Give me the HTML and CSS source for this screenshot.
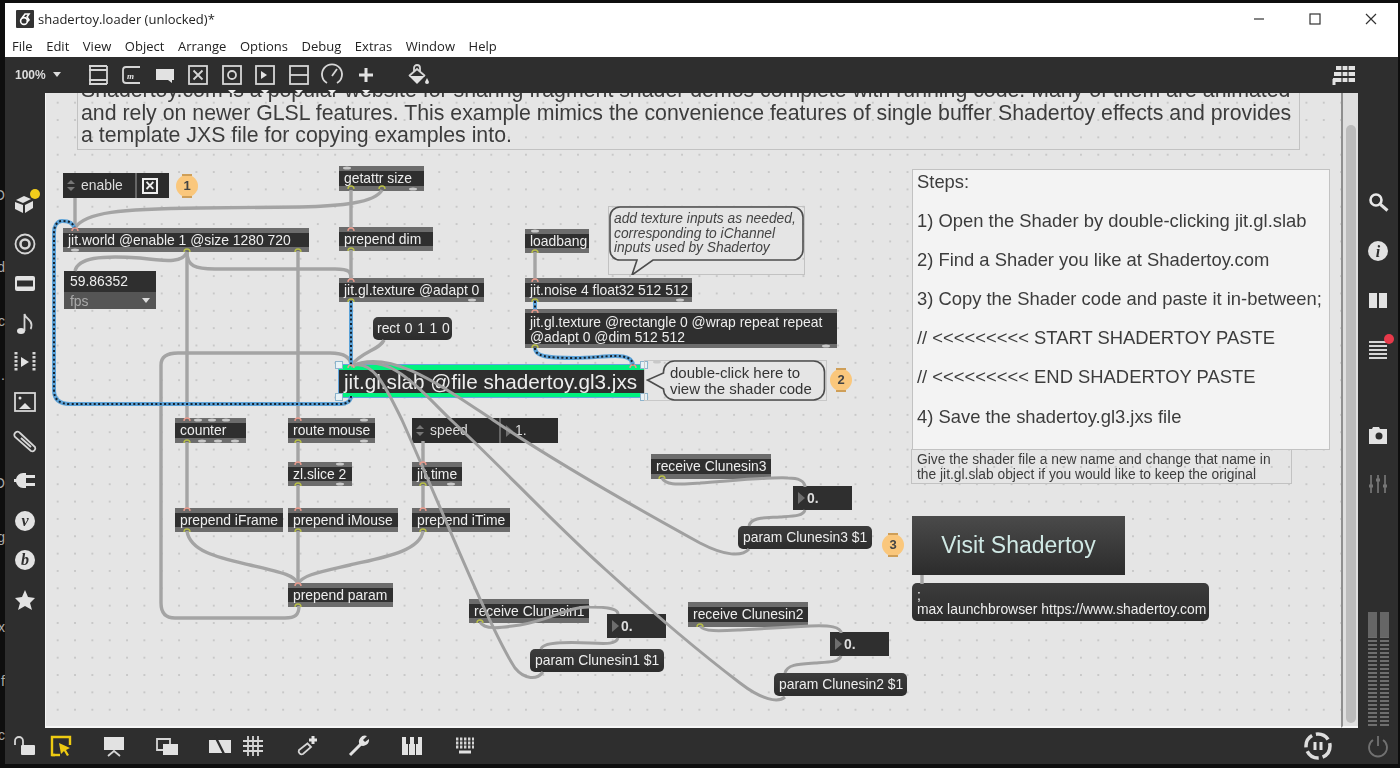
FILE: index.html
```html
<!DOCTYPE html>
<html lang="en">
<head>
    <meta charset="UTF-8">
    <meta name="viewport" content="width=device-width, initial-scale=1.0">
    <title>shadertoy.loader</title>
    <link rel="stylesheet" href="styles.css">
</head>
<body>
    <pre class="edge">










O



d


c


.





O


g




x


f


c</pre>

    <div class="window">
        <div class="titlebar">
            <svg class="app-icon" viewBox="0 0 18 18"><rect width="18" height="18" rx="1" fill="#333"/><circle cx="8" cy="11" r="3.4" fill="none" stroke="#fff" stroke-width="1.6"/><path d="M6 8 9 4h4l-2 3 2 3-2 2" fill="none" stroke="#fff" stroke-width="1.6"/></svg>
            <span class="title">shadertoy.loader (unlocked)*</span>
            <div class="win-btns">
                <svg class="win-btn" viewBox="0 0 12 12"><path d="M1 6h10"/></svg>
                <svg class="win-btn" viewBox="0 0 12 12"><rect x="1" y="1" width="10" height="10"/></svg>
                <svg class="win-btn" viewBox="0 0 12 12"><path d="M1 1l10 10M11 1 1 11"/></svg>
            </div>
        </div>

        <div class="menubar">
            <span>File</span><span>Edit</span><span>View</span><span>Object</span><span>Arrange</span><span>Options</span><span>Debug</span><span>Extras</span><span>Window</span><span>Help</span>
        </div>

        <div class="toolbar">
            <span class="zoom-label">100% <i class="caret"></i></span>
            <svg class="ico" viewBox="0 0 24 24"><path d="M3 3h18M3 7h18M3 17h18M3 21h18M4 3v18M21 3v18"/></svg>
            <svg class="ico" viewBox="0 0 24 24"><path d="M21 4H7a3 3 0 0 0-3 3v10a3 3 0 0 0 3 3h14"/><text x="8" y="16" class="ico-text">m</text></svg>
            <svg class="ico" viewBox="0 0 24 24"><path class="solid" d="M3 6h18v11h-2v3l-4-3H3z"/></svg>
            <svg class="ico" viewBox="0 0 24 24"><rect x="3" y="3" width="18" height="18"/><path d="M7.5 7.5l9 9M16.5 7.5l-9 9"/></svg>
            <div class="drop"><svg class="ico" viewBox="0 0 24 24"><rect x="3" y="3" width="18" height="18"/><circle cx="12" cy="12" r="4"/></svg></div>
            <div class="drop"><svg class="ico" viewBox="0 0 24 24"><rect x="3" y="3" width="18" height="18"/><path class="solid" d="M8 8l6 4-6 4z"/></svg></div>
            <div class="drop"><svg class="ico" viewBox="0 0 24 24"><rect x="3" y="3" width="18" height="18"/><path d="M3 12h18"/></svg></div>
            <div class="drop"><svg class="ico" viewBox="0 0 24 24"><path d="M7 20a10 10 0 1 1 10 0"/><path d="M12 13l5-7"/></svg></div>
            <div class="drop"><svg class="ico" viewBox="0 0 24 24"><path class="thick" d="M12 5v14M5 12h14"/></svg></div>
            <svg class="ico push" viewBox="0 0 24 24"><path class="solid" d="M3 13l8 8 8-8H3z"/><path d="M3 13l8-7 8 7"/><path d="M8 9V5a3 3 0 0 1 6 0v3"/><path class="solid" d="M21 15l2 4a2 2 0 0 1-4 0z"/></svg>
            <svg class="ico ico-table" viewBox="0 0 24 24"><path class="solid" d="M4 3h19v4H4zM2 9h21v4H2zM1 15h22v4H1z"/><path class="slit" d="M10 3v16M16 3v16"/><path class="thick" d="M2 16v6"/></svg>
        </div>

        <div class="main">
            <div class="side side-left">
                <div class="with-dot">
                    <svg class="ico" viewBox="0 0 24 24"><path class="solid" d="M3 8l8-4 7 3-8 4zM2 10l8 3v8l-8-4zM12 13l8-4v7l-8 5z"/></svg>
                    <i class="dot dot-yellow"></i>
                </div>
                <svg class="ico" viewBox="0 0 24 24"><circle cx="12" cy="12" r="9.5"/><circle class="solid-ring" cx="12" cy="12" r="4.5"/></svg>
                <svg class="ico" viewBox="0 0 24 24"><rect class="solid" x="2" y="5" width="20" height="15" rx="2"/><rect class="punch" x="4" y="9.5" width="16" height="6"/></svg>
                <svg class="ico" viewBox="0 0 24 24"><ellipse class="solid" cx="8" cy="20" rx="4" ry="3"/><path d="M11.5 20V3c1 5 7 5 7 11 0 1 0 3-1 4"/></svg>
                <svg class="ico" viewBox="0 0 24 24"><path class="dash" d="M3 2v20M21 2v20"/><path class="solid" d="M8 7l8 5-8 5z"/></svg>
                <svg class="ico" viewBox="0 0 24 24"><rect x="2" y="3" width="20" height="18"/><circle class="solid" cx="7" cy="8" r="1.5"/><path class="solid" d="M6 19l6-6 6 6z"/></svg>
                <svg class="ico" viewBox="0 0 24 24"><path d="M7 3l15 14a3 3 0 0 1-4 4L2 7a3 3 0 0 1 5-4z"/><path d="M8 8l10 9"/></svg>
                <svg class="ico" viewBox="0 0 24 24"><path class="solid" d="M13 4h-3a8 8 0 0 0-7 6H1v3h2a8 8 0 0 0 7 6h3zM13 6h9v3h-9zM13 14h9v3h-9z"/></svg>
                <svg class="ico" viewBox="0 0 24 24"><circle class="solid" cx="12" cy="12" r="10"/><text x="12" y="17" class="ico-letter">v</text></svg>
                <svg class="ico" viewBox="0 0 24 24"><circle class="solid" cx="12" cy="12" r="10"/><text x="12" y="17" class="ico-letter">b</text></svg>
                <svg class="ico" viewBox="0 0 24 24"><path class="solid" d="M12 2l3 7 7 1-5 5 2 7-7-4-7 4 2-7-5-5 7-1z"/></svg>
            </div>

            <div class="patcher">
                <div class="node comment intro">Shadertoy.com is a popular website for sharing fragment shader demos complete with running code. Many of them are animated<br>and rely on newer GLSL features. This example mimics the convenience features of single buffer Shadertoy effects and provides<br>a template JXS file for copying examples into.</div>

                <div class="node attrui enable">
                    <span class="updown"></span><span class="attr-name">enable</span>
                    <span class="attr-val"><i class="check"></i></span>
                </div>
                <div class="node badge b1">1</div>

                <div class="node obj getattr">getattr size</div>
                <div class="node obj world">jit.world @enable 1 @size 1280 720</div>
                <div class="node obj pdim">prepend dim</div>
                <div class="node fps"><div class="fps-val">59.86352</div><div class="fps-unit">fps<i class="caret"></i></div></div>
                <div class="node obj gltex">jit.gl.texture @adapt 0</div>
                <div class="node msg rect">rect 0 1 1 0</div>
                <div class="node obj loadbang">loadbang</div>
                <div class="node obj noise">jit.noise 4 float32 512 512</div>
                <div class="node obj texrect">jit.gl.texture @rectangle 0 @wrap repeat repeat<br>@adapt 0 @dim 512 512</div>

                <div class="node balloon note">
                    <svg viewBox="0 0 197 69"><path d="M12 1h173a10 10 0 0 1 10 10v33a10 10 0 0 1-10 10H45L24 69l5-15H12A10 10 0 0 1 2 44V11A10 10 0 0 1 12 1z"/></svg>
                    <p>add texture inputs as needed,<br>corresponding to iChannel<br>inputs used by Shadertoy</p>
                </div>

                <div class="node slab">jit.gl.slab @file shadertoy.gl3.jxs<i class="grip g-tl"></i><i class="grip g-bl"></i><i class="grip g-tr"></i><i class="grip g-br"></i></div>

                <div class="node balloon dbl">
                    <svg viewBox="0 0 182 41"><path d="M30 1h139a11 11 0 0 1 11 11v17a11 11 0 0 1-11 11H30a11 11 0 0 1-11-11l-16-9 16-7v-1A11 11 0 0 1 30 1z"/></svg>
                    <p>double-click here to<br>view the shader code</p>
                </div>
                <div class="node badge b2">2</div>

                <div class="node obj counter">counter</div>
                <div class="node obj route">route mouse</div>
                <div class="node attrui speed">
                    <span class="updown"></span><span class="attr-name">speed</span>
                    <span class="attr-val"><i class="tri"></i>1.</span>
                </div>
                <div class="node obj zl">zl.slice 2</div>
                <div class="node obj jtime">jit.time</div>
                <div class="node obj iframe">prepend iFrame</div>
                <div class="node obj imouse">prepend iMouse</div>
                <div class="node obj itime">prepend iTime</div>
                <div class="node obj pparam">prepend param</div>

                <div class="node obj recv3">receive Clunesin3</div>
                <div class="node num num3"><i class="tri"></i>0.</div>
                <div class="node msg par3">param Clunesin3 $1</div>
                <div class="node badge b3">3</div>

                <div class="node obj recv1">receive Clunesin1</div>
                <div class="node num num1"><i class="tri"></i>0.</div>
                <div class="node msg par1">param Clunesin1 $1</div>

                <div class="node obj recv2">receive Clunesin2</div>
                <div class="node num num2"><i class="tri"></i>0.</div>
                <div class="node msg par2">param Clunesin2 $1</div>

                <div class="node comment steps">
                    <p>Steps:</p>
                    <p>1) Open the Shader by double-clicking jit.gl.slab</p>
                    <p>2) Find a Shader you like at Shadertoy.com</p>
                    <p>3) Copy the Shader code and paste it in-between;</p>
                    <p>// &lt;&lt;&lt;&lt;&lt;&lt;&lt;&lt;&lt; START SHADERTOY PASTE</p>
                    <p>// &lt;&lt;&lt;&lt;&lt;&lt;&lt;&lt;&lt; END SHADERTOY PASTE</p>
                    <p>4) Save the shadertoy.gl3.jxs file</p>
                </div>
                <div class="node comment give">Give the shader file a new name and change that name in<br>the jit.gl.slab object if you would like to keep the original</div>

                <div class="node visit">Visit Shadertoy</div>
                <div class="node msg launch">;<br>max launchbrowser https://www.shadertoy.com</div>

                <!-- patch cords, in page coordinates -->
                <svg class="cords" viewBox="45 93 1296 635">
                    <g class="ghosts">
                        <ellipse cx="347" cy="168" rx="4" ry="1.5"/><ellipse cx="413" cy="189" rx="4" ry="1.5"/>
                        <ellipse cx="75" cy="250" rx="4" ry="1.5"/><ellipse cx="472" cy="300" rx="4" ry="1.5"/>
                        <ellipse cx="535" cy="231" rx="4" ry="1.5"/><ellipse cx="680" cy="300" rx="4" ry="1.5"/>
                        <ellipse cx="826" cy="346" rx="4" ry="1.5"/><ellipse cx="657" cy="362" rx="4" ry="1.5"/>
                        <ellipse cx="198" cy="420" rx="4" ry="1.5"/><ellipse cx="212" cy="420" rx="4" ry="1.5"/><ellipse cx="226" cy="420" rx="4" ry="1.5"/>
                        <ellipse cx="202" cy="441" rx="4" ry="1.5"/><ellipse cx="218" cy="441" rx="4" ry="1.5"/><ellipse cx="235" cy="441" rx="4" ry="1.5"/>
                        <ellipse cx="364" cy="420" rx="4" ry="1.5"/><ellipse cx="364" cy="441" rx="4" ry="1.5"/>
                        <ellipse cx="340" cy="464" rx="4" ry="1.5"/><ellipse cx="340" cy="484" rx="4" ry="1.5"/><ellipse cx="451" cy="484" rx="4" ry="1.5"/>
                    </g>
                    <path d="M75 198V228"/>
                    <path d="M382 190C375 203 340 206 300 207L200 208C120 209 85 212 75 228"/>
                    <path d="M351 190V228M351 250V279"/>
                    <path d="M187 252C183 262 170 262 140 258C100 255 78 258 75 271"/>
                    <path d="M187 252C187 266 195 269 215 269L335 269C350 269 351 272 351 279"/>
                    <path d="M187 252V418M298 251V418"/>
                    <path d="M535 252V279"/>
                    <path d="M384 340C380 350 360 352 351 366"/>
                    <path d="M299 606C299 615 295 618 285 618L175 618C165 618 161 612 161 603L161 365C161 356 168 353 178 353L330 353C345 353 351 358 351 366"/>
                    <path class="thin" d="M543 672C537 680 525 680 515 668C490 630 440 505 402 420C385 385 372 358 351 366"/>
                    <path class="thin" d="M785 697C778 703 762 700 740 683C690 645 650 610 606 570C550 520 500 465 451 420C415 385 390 352 351 366"/>
                    <path class="thin" d="M749 549C742 557 725 556 700 543C640 510 560 465 493 420C440 385 390 348 351 366"/>
                    <path d="M187 442V509M298 442V463M298 485V509M423 441V463M423 485V509"/>
                    <path d="M187 531C190 552 220 558 250 565C280 572 295 575 298 584"/>
                    <path d="M298 531V584"/>
                    <path d="M423 531C420 552 380 558 350 565C320 572 302 575 298 584"/>
                    <path d="M922 575V584"/>
                    <path class="thin" d="M662 478C666 486 680 484 700 483C740 480 770 477 788 478C798 478 805 481 805 487"/>
                    <path class="thin" d="M805 510C803 516 795 516 780 517C765 518 751 517 749 526"/>
                    <path class="thin" d="M480 622C484 630 500 628 520 625C550 620 570 606 590 607C610 607 618 609 618 614"/>
                    <path class="thin" d="M618 638C616 644 608 644 590 643C565 642 543 642 541 649"/>
                    <path class="thin" d="M700 626C704 632 720 631 740 630L810 626C830 625 841 627 841 633"/>
                    <path class="thin" d="M841 656C839 662 830 662 815 663C800 664 787 664 785 673"/>

                    <g class="jit">
                        <path d="M75 229C73 222 68 221 62 221C57 221 54 226 54 233L54 390C54 400 60 404 70 404L340 404C347 404 351 401 351 396"/>
                        <path d="M351 301V366"/>
                        <path d="M535 301V310"/>
                        <path d="M535 348C535 356 545 358 575 358C605 358 633 350 633 366"/>
                    </g>
                    <g class="jit-dash">
                        <path d="M75 229C73 222 68 221 62 221C57 221 54 226 54 233L54 390C54 400 60 404 70 404L340 404C347 404 351 401 351 396"/>
                        <path d="M351 301V366"/>
                        <path d="M535 301V310"/>
                        <path d="M535 348C535 356 545 358 575 358C605 358 633 350 633 366"/>
                    </g>

                    <g class="inlets">
                        <path d="M72 231a3 3 0 0 1 6 0M348 231a3 3 0 0 1 6 0M348 282a3 3 0 0 1 6 0M532 282a3 3 0 0 1 6 0M532 313a3 3 0 0 1 6 0M348 368a3 3 0 0 1 6 0M630 368a3 3 0 0 1 6 0"/>
                        <path d="M184 421a3 3 0 0 1 6 0M295 421a3 3 0 0 1 6 0M295 465a3 3 0 0 1 6 0M420 465a3 3 0 0 1 6 0M184 511a3 3 0 0 1 6 0M295 511a3 3 0 0 1 6 0M420 511a3 3 0 0 1 6 0M295 586a3 3 0 0 1 6 0"/>
                    </g>
                    <g class="outlets">
                        <path d="M348 189a3 3 0 0 1 6 0M379 189a3 3 0 0 1 6 0M184 252a3 3 0 0 1 6 0M295 252a3 3 0 0 1 6 0M348 251a3 3 0 0 1 6 0M348 302a3 3 0 0 1 6 0M532 253a3 3 0 0 1 6 0M532 302a3 3 0 0 1 6 0M532 348a3 3 0 0 1 6 0"/>
                        <path d="M184 443a3 3 0 0 1 6 0M295 443a3 3 0 0 1 6 0M295 486a3 3 0 0 1 6 0M420 486a3 3 0 0 1 6 0M184 532a3 3 0 0 1 6 0M295 532a3 3 0 0 1 6 0M420 532a3 3 0 0 1 6 0M295 607a3 3 0 0 1 6 0"/>
                        <path d="M659 479a3 3 0 0 1 6 0M477 623a3 3 0 0 1 6 0M697 627a3 3 0 0 1 6 0"/>
                    </g>
                </svg>
            </div>

            <div class="scrollbar"><div class="thumb"></div></div>

            <div class="side side-right">
                <svg class="ico" viewBox="0 0 24 24"><circle class="ring-thick" cx="10" cy="10" r="5.5"/><path class="thick" d="M14.5 14.5l7 6"/></svg>
                <svg class="ico" viewBox="0 0 24 24"><circle class="solid" cx="12" cy="12" r="10"/><text x="12" y="18" class="ico-letter">i</text></svg>
                <svg class="ico" viewBox="0 0 24 24"><path class="solid" d="M3 5h8v15H3zM13 5h8v15h-8z"/></svg>
                <div class="with-dot">
                    <svg class="ico" viewBox="0 0 24 24"><path d="M3 5h18M3 9h18M3 13h18M3 17h18M3 21h18"/></svg>
                    <i class="dot dot-red"></i>
                </div>
                <svg class="ico camera" viewBox="0 0 24 24"><path class="solid" d="M3 6h3l1-2h6l1 2h7v15H3z"/><circle class="punch" cx="13" cy="13" r="3.5"/></svg>
                <svg class="ico dim" viewBox="0 0 24 24"><path d="M5 3v18M12 3v18M19 3v18"/><path class="thick" d="M3 14h4M10 8h4M17 14h4"/></svg>
                <div class="meters"><div class="meter"></div><div class="meter"></div></div>
            </div>
        </div>

        <div class="bottombar">
            <svg class="ico" viewBox="0 0 24 24"><path d="M2 11V7a4 4 0 0 1 8 0v4"/><rect class="solid" x="8" y="11" width="14" height="10" rx="1"/></svg>
            <svg class="ico ico-yellow gap-m" viewBox="0 0 24 24"><path d="M6 21H3V3h18v8"/><path d="M3 21h8"/><path class="solid" d="M10 9l11 5-4 2 3 5-2 1-3-5-3 3z"/></svg>
            <svg class="ico gap-l" viewBox="0 0 24 24"><path class="solid" d="M2 3h20v13H2z"/><path d="M6 22l6-5 6 5"/></svg>
            <svg class="ico gap-l" viewBox="0 0 24 24"><path d="M2 5h13v11H2z"/><path class="solid" d="M8 10h15v11H8z"/></svg>
            <svg class="ico gap-l" viewBox="0 0 24 24"><path class="solid" d="M1 6h22v13H1z"/><path class="slash" d="M7 2l10 20"/></svg>
            <svg class="ico gap-s" viewBox="0 0 24 24"><path d="M7 2v20M12 2v20M17 2v20M2 7h20M2 12h20M2 17h20"/></svg>
            <svg class="ico gap-l" viewBox="0 0 24 24"><path d="M14 9 5 16a3 3 0 0 0 4 4l8-7-4-4"/><path class="thick" d="M19 2v8M15 6h8"/></svg>
            <svg class="ico gap-l" viewBox="0 0 24 24"><path class="thick" d="M3 21 14 10"/><path class="solid" d="M13 11a6 6 0 0 1 7-9l-4 4 2 2 4-3a6 6 0 0 1-9 6z"/></svg>
            <svg class="ico gap-l" viewBox="0 0 24 24"><path class="solid" d="M2 3h4v7h2v11H2zM10 10V3h4v7h1v11h-6V10zM18 3h4v18h-6V10h2z"/></svg>
            <svg class="ico gap-l" viewBox="0 0 24 24"><path class="dash" d="M3 5h18M3 9h18M3 13h18"/><path class="thick" d="M6 18h12"/></svg>
            <svg class="ico pause" viewBox="0 0 28 28"><circle class="dash-ring" cx="14" cy="14" r="12"/><path class="thick" d="M11 10v8M17 10v8"/></svg>
            <svg class="ico power dim" viewBox="0 0 24 24"><path d="M7 6a9 9 0 1 0 10 0M12 2v10"/></svg>
        </div>
    </div>
</body>
</html>
```

FILE: styles.css
```css
* {
    margin: 0;
    padding: 0;
    box-sizing: border-box;
}

body {
    display: flex;
    height: 768px;
    overflow: hidden;
    background: #0e0e0e;
    font-family: "Liberation Sans", Arial, sans-serif;
}

.edge {
    width: 5px;
    flex: none;
    overflow: hidden;
    padding-top: 6px;
    direction: rtl;
    font: 14px/18px "Liberation Sans", sans-serif;
    color: #aaa;
}

.window {
    width: 1393px;
    height: 761px;
    margin-top: 3px;
    flex: none;
    display: flex;
    flex-direction: column;
    background: #2e2e2e;
    filter: blur(0.45px);
}

/* title and menu */
.titlebar {
    height: 34px;
    flex: none;
    display: flex;
    align-items: center;
    padding: 0 0 2px 11px;
    background: #fff;
}

.app-icon {
    width: 18px;
    height: 18px;
}

.title {
    margin-left: 4px;
    font: 13px "Open Sans", sans-serif;
    color: #222;
}

.win-btns {
    display: flex;
    margin-left: auto;
    gap: 44px;
    padding-right: 21px;
}

.win-btn {
    width: 12px;
    height: 12px;
    fill: none;
    stroke: #333;
    stroke-width: 1.2;
}

.menubar {
    height: 20px;
    flex: none;
    display: flex;
    gap: 13.6px;
    padding-left: 7px;
    background: #fff;
    font: 13px/18px "Open Sans", sans-serif;
    color: #222;
}

/* icons */
.ico {
    width: 24px;
    height: 24px;
    flex: none;
    display: block;
    overflow: visible;
    fill: none;
    stroke: #d6d6d6;
    stroke-width: 1.8;
}

.ico .solid {
    fill: #e2e2e2;
    stroke: none;
}

.ico .thick {
    stroke: #e2e2e2;
    stroke-width: 3;
}

.ico .slit {
    stroke: #2e2e2e;
    stroke-width: 1.2;
}

.ico .dash {
    stroke-width: 3;
    stroke-dasharray: 2.4 1.6;
}

.ico .dash-ring {
    stroke-width: 3.5;
    stroke-dasharray: 14 4;
}

.ico .solid-ring {
    stroke-width: 2.6;
}

.ico .ring-thick {
    stroke: #e8e8e8;
    stroke-width: 2.6;
}

.ico .punch {
    fill: #2e2e2e;
    stroke: none;
}

.ico .slash {
    stroke: #2e2e2e;
    stroke-width: 2.4;
}

.ico-text {
    font: italic bold 9px "Liberation Serif", serif;
    fill: #e2e2e2;
    stroke: none;
}

.ico-letter {
    font: italic bold 16px "Liberation Serif", serif;
    text-anchor: middle;
    fill: #2e2e2e;
    stroke: none;
}

.ico-yellow {
    stroke: #eecb12;
    stroke-width: 2.4;
}

.ico-yellow .solid {
    fill: #eecb12;
}

.dim {
    opacity: 0.4;
}

.with-dot {
    position: relative;
}

.dot {
    position: absolute;
    border-radius: 50%;
    width: 10px;
    height: 10px;
}

.dot-yellow {
    top: -3px;
    right: -3px;
    background: #f2cd1c;
}

.dot-red {
    top: -3px;
    right: -4px;
    background: #e8394a;
}

.caret {
    display: inline-block;
    width: 0;
    height: 0;
    margin-left: 4px;
    vertical-align: 2px;
    border-left: 4px solid transparent;
    border-right: 4px solid transparent;
    border-top: 5px solid #ddd;
}

/* toolbar */
.toolbar {
    height: 36px;
    flex: none;
    display: flex;
    align-items: center;
    gap: 9.5px;
    padding: 0 42px 0 10px;
}

.zoom-label {
    width: 61px;
    font-size: 12px;
    font-weight: bold;
    color: #ddd;
}

.drop {
    position: relative;
}

.drop::after {
    content: "";
    position: absolute;
    left: 8px;
    bottom: -7px;
    border-left: 4px solid transparent;
    border-right: 4px solid transparent;
    border-top: 4px solid #eee;
}

.push {
    margin-left: 19px;
}

.ico-table {
    margin-left: auto;
}

/* main area */
.main {
    height: 635px;
    flex: none;
    display: flex;
}

.side {
    width: 40px;
    flex: none;
    display: flex;
    flex-direction: column;
    align-items: center;
}

.side-left {
    gap: 15.6px;
    padding-top: 99px;
}

.side-right {
    gap: 25px;
    padding-top: 97px;
}

.camera {
    margin-top: 37px;
}

.meters {
    display: flex;
    gap: 3px;
    margin-top: 91px;
}

.meter {
    width: 9px;
    height: 115px;
    background:
        linear-gradient(#666 0 25px, transparent 25px),
        repeating-linear-gradient(#6e6e6e 0 2px, #2e2e2e 2px 4px);
}

.patcher {
    position: relative;
    width: 1296px;
    flex: none;
    overflow: hidden;
    background-color: #e5e5e5;
    background-image: radial-gradient(circle, #c8c8c8 0.8px, transparent 1.1px);
    background-size: 17.35px 17.35px;
    background-position: 4px 1px;
    border-bottom: 2px solid #f6f6f6;
}

.patcher::before {
    content: "";
    position: absolute;
    left: 0;
    top: 0;
    bottom: 0;
    width: 1px;
    background: #f6f6f6;
}

.scrollbar {
    width: 17px;
    flex: none;
    padding: 32px 2px 3px 3px;
    background: #dfdfdf;
    border-left: 2px solid #8f8f8f;
    border-bottom: 2px solid #f6f6f6;
}

.thumb {
    height: 100%;
    border-radius: 6px;
    background: #bcbcbc;
}

.bottombar {
    height: 36px;
    flex: none;
    display: flex;
    align-items: center;
    padding-left: 8px;
}

.gap-s {
    margin-left: 9px;
}

.gap-m {
    margin-left: 12px;
}

.gap-l {
    margin-left: 29px;
}

.pause {
    width: 28px;
    height: 28px;
    margin-left: auto;
    stroke: #ddd;
}

.power {
    margin-left: 34px;
    margin-right: 8px;
}

/* max objects, placed on the patcher canvas */
.node {
    position: absolute;
    white-space: nowrap;
}

.obj {
    height: 24px;
    padding-left: 5px;
    background: #2f2f2f;
    border-top: 5px solid #6c6c6c;
    border-bottom: 5px solid #6c6c6c;
    font-size: 13.9px;
    line-height: 14px;
    color: #eee;
}

.msg {
    height: 23px;
    padding-left: 5px;
    border-radius: 5px;
    background: linear-gradient(#3c3c3c, #2c2c2c);
    font-size: 13.9px;
    line-height: 23px;
    color: #eee;
}

.num {
    display: flex;
    align-items: center;
    width: 59px;
    height: 24px;
    padding-left: 5px;
    background: #2f2f2f;
    font-size: 13.9px;
    font-weight: bold;
    color: #ddd;
}

.tri {
    width: 0;
    height: 0;
    margin-right: 2px;
    border-top: 6px solid transparent;
    border-bottom: 6px solid transparent;
    border-left: 7px solid #6e6e6e;
}

.attrui {
    display: flex;
    height: 25px;
    background: #2c2c2c;
    font-size: 13.9px;
    line-height: 25px;
    color: #ddd;
}

.updown {
    position: relative;
    width: 18px;
    flex: none;
}

.updown::before,
.updown::after {
    content: "";
    position: absolute;
    left: 4px;
    border-left: 4px solid transparent;
    border-right: 4px solid transparent;
}

.updown::before {
    top: 7px;
    border-bottom: 4px solid #777;
}

.updown::after {
    bottom: 7px;
    border-top: 4px solid #777;
}

.attr-val {
    display: flex;
    align-items: center;
    flex: 1;
    padding-left: 5px;
    border-left: 2px solid #666;
}

.check {
    position: relative;
    width: 16px;
    height: 16px;
    border: 2px solid #eee;
}

.check::before {
    content: "\00d7";
    position: absolute;
    inset: 0;
    font: bold 16px/12px "Liberation Sans", sans-serif;
    text-align: center;
    color: #eee;
}

.fps-val {
    height: 21px;
    padding-left: 6px;
    background: #2f2f2f;
    font-size: 13.9px;
    line-height: 21px;
    color: #eee;
}

.fps-unit {
    display: flex;
    align-items: center;
    justify-content: space-between;
    height: 17px;
    padding: 0 6px;
    background: #555;
    font-size: 13.9px;
    color: #aaa;
}

.comment {
    border: 1px solid #c2c2c2;
    color: #3c3c3c;
}

.intro {
    left: 32px;
    top: -20px;
    width: 1223px;
    height: 77px;
    padding: 5px 3px;
    font-size: 21.3px;
    line-height: 22.5px;
}

.steps {
    left: 867px;
    top: 76px;
    width: 418px;
    height: 281px;
    padding: 2px 4px;
    background: #f3f3f3;
    font-size: 18.4px;
    line-height: 20px;
}

.steps p {
    margin-bottom: 19.1px;
}

.give {
    left: 866px;
    top: 356px;
    width: 381px;
    height: 35px;
    padding: 2px 5px;
    font-size: 13.8px;
    line-height: 15px;
}

.balloon svg {
    position: absolute;
    left: -1px;
    top: -1px;
    fill: #e5e5e5;
    stroke: #4c4c4c;
    stroke-width: 1.6;
}

.balloon p {
    position: relative;
}

.note {
    left: 563px;
    top: 113px;
    width: 197px;
    height: 69px;
    border: 1px solid #c2c2c2;
    padding: 5px 5px;
    font: italic 13.8px/14.5px "Liberation Sans", sans-serif;
    color: #444;
}

.note svg {
    width: 197px;
    height: 69px;
}

.dbl {
    left: 599px;
    top: 267px;
    width: 183px;
    height: 41px;
    border: 1px solid #c8c8c8;
    padding: 4px 0 0 25px;
    font-size: 15px;
    line-height: 16px;
    color: #333;
}

.dbl svg {
    width: 183px;
    height: 41px;
}

.badge {
    width: 22px;
    height: 22px;
    border-radius: 50%;
    background: #fac77c;
    font-size: 13px;
    font-weight: bold;
    line-height: 22px;
    text-align: center;
    color: #444;
}

.badge::before,
.badge::after {
    content: "";
    position: absolute;
    left: 6px;
    width: 10px;
    height: 2px;
    background: #cf9f58;
}

.badge::before {
    top: -1px;
}

.badge::after {
    bottom: -1px;
}

.slab {
    left: 294px;
    top: 272px;
    width: 305px;
    height: 32px;
    padding-left: 5px;
    background: #2f2f2f;
    border-top: 5px solid #00f27e;
    border-bottom: 4px solid #00f27e;
    outline: 1.5px solid #62a6e0;
    font-size: 20.7px;
    line-height: 24px;
    color: #eee;
}

.grip {
    position: absolute;
    width: 8px;
    height: 8px;
    background: #e8f2f6;
    border: 1px solid #8cb4cc;
}

.g-tl { left: -4px; top: -9px; }
.g-bl { left: -4px; bottom: -8px; }
.g-tr { right: -4px; top: -9px; }
.g-br { right: -4px; bottom: -8px; }

.visit {
    left: 867px;
    top: 423px;
    width: 213px;
    height: 59px;
    background: linear-gradient(#4a4a4a, #2c2c2c);
    font-size: 23px;
    line-height: 59px;
    text-align: center;
    color: #cfe8e4;
}

/* object positions */
.enable { left: 18px; top: 80px; width: 106px; }
.b1 { left: 131px; top: 82px; }
.getattr { left: 294px; top: 73px; width: 85px; height: 25px; }
.world { left: 18px; top: 135px; width: 246px; }
.pdim { left: 294px; top: 134px; width: 94px; }
.fps { left: 19px; top: 178px; width: 92px; }
.gltex { left: 294px; top: 185px; width: 145px; }
.rect { left: 328px; top: 224px; width: 79px; padding-left: 4px; word-spacing: 0.8px; }
.loadbang { left: 480px; top: 136px; width: 64px; }
.noise { left: 480px; top: 185px; width: 167px; }
.texrect { left: 480px; top: 216px; width: 312px; height: 39px; padding-top: 2px; line-height: 15px; border-bottom-width: 4px; border-top-width: 4px; }
.b2 { left: 785px; top: 276px; }
.counter { left: 130px; top: 325px; width: 71px; height: 25px; }
.route { left: 243px; top: 325px; width: 87px; height: 25px; }
.speed { left: 367px; top: 325px; width: 146px; }
.speed .attr-name { width: 69px; }
.enable .attr-name { width: 54px; }
.zl { left: 243px; top: 369px; width: 64px; }
.jtime { left: 367px; top: 369px; width: 50px; }
.iframe { left: 130px; top: 415px; width: 108px; }
.imouse { left: 243px; top: 415px; width: 110px; }
.itime { left: 367px; top: 415px; width: 98px; }
.pparam { left: 243px; top: 490px; width: 105px; }
.recv3 { left: 606px; top: 361px; width: 120px; height: 25px; }
.num3 { left: 748px; top: 393px; }
.par3 { left: 693px; top: 433px; width: 134px; }
.b3 { left: 837px; top: 441px; }
.recv1 { left: 424px; top: 506px; width: 120px; }
.num1 { left: 562px; top: 521px; }
.par1 { left: 485px; top: 556px; width: 134px; }
.recv2 { left: 643px; top: 509px; width: 120px; height: 25px; }
.num2 { left: 785px; top: 539px; }
.par2 { left: 729px; top: 580px; width: 133px; }
.launch { left: 867px; top: 490px; width: 297px; height: 38px; padding-top: 5px; line-height: 14px; }

/* patch cords */
.cords {
    position: absolute;
    left: 0;
    top: 0;
    width: 1296px;
    height: 635px;
    fill: none;
    stroke: #a4a4a4;
    stroke-width: 3.4;
    pointer-events: none;
}

.cords .thin {
    stroke-width: 3;
    stroke: #a0a0a0;
}

.ghosts {
    fill: #c8c8c8;
    stroke: none;
}

.jit {
    stroke: #5da3d8;
    stroke-width: 4;
}

.jit-dash {
    stroke: #14202c;
    stroke-width: 2;
    stroke-dasharray: 2 2.4;
}

.inlets {
    stroke: #e89a8c;
    stroke-width: 1.4;
}

.outlets {
    stroke: #b8bf48;
    stroke-width: 1.4;
}
```
